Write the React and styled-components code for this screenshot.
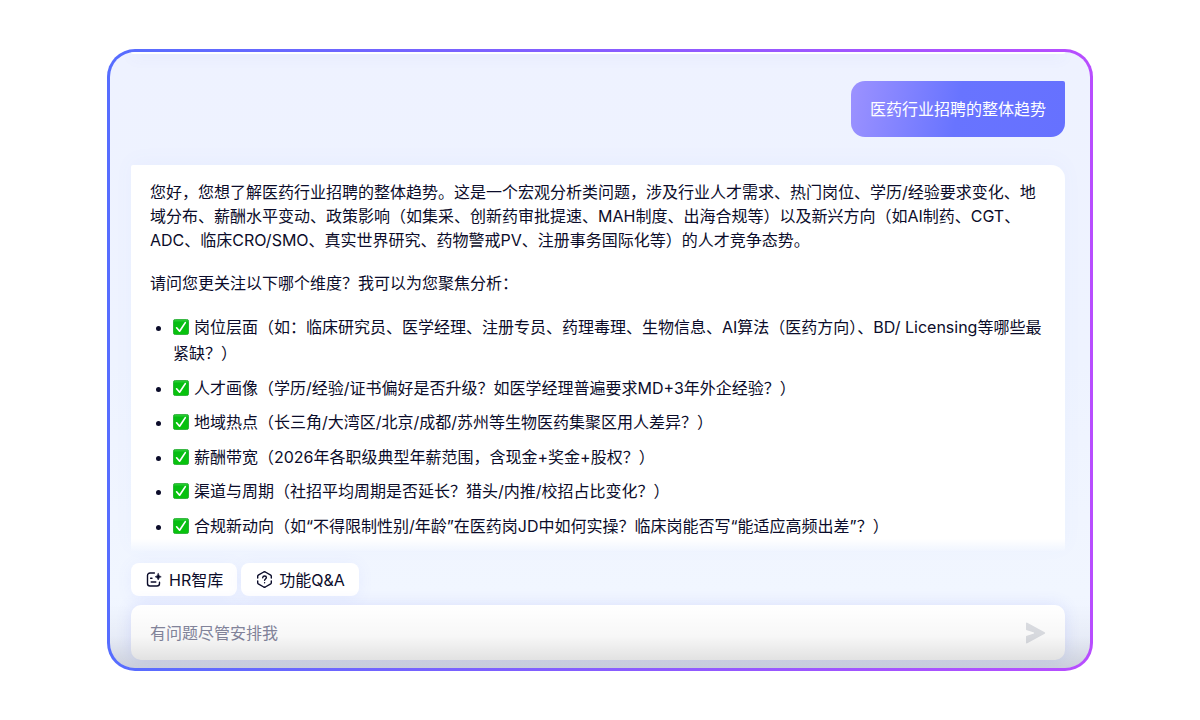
import React from "react";
import styled, { createGlobalStyle } from "styled-components";

const GlobalStyle = createGlobalStyle`
  * { box-sizing: border-box; }
  body {
    margin: 0;
    background: #fff;
    color: #0b0c2a;
    font: 16px/24px Inter, "Noto Sans CJK SC", sans-serif;
  }
`;

const Page = styled.main`
  min-height: 100vh;
  padding: 49px calc(9% - 1px);
  display: flex;
  flex-direction: column;
`;

const Frame = styled.section`
  flex: 1;
  display: flex;
  padding: 3px;
  border-radius: 28px;
  background: linear-gradient(90deg, #566dff, #b84dff);
`;

const Panel = styled.div`
  position: relative;
  flex: 1;
  min-width: 0;
  display: flex;
  flex-direction: column;
  overflow: hidden;
  padding: 0 25px 8px 21px;
  border-radius: 25px;
  background: linear-gradient(180deg, #eef2ff 0%, #eef3ff 50%, #f1f6ff 88%, #edf2ff 100%);
`;

const HeaderEdge = styled.div`
  height: 2px;
  flex: none;
  border-radius: 0 0 12px 12px;
  background: #fff;
  box-shadow: 0 2px 14px rgba(88, 96, 220, 0.18);
`;

const UserRow = styled.div`
  display: flex;
  justify-content: flex-end;
  padding: 27px 0 28px;
`;

const Bubble = styled.p`
  margin: 0;
  padding: 16px 19px;
  border-radius: 14px 2px 14px 14px;
  background: linear-gradient(100deg, #9c92ff 0%, #6874ff 50%, #6671ff 100%);
  color: #fff;
`;

const Answer = styled.article`
  flex: 1;
  padding: 15px 18px 11px 19px;
  border-radius: 2px 14px 0 0;
  background: linear-gradient(180deg, #fff calc(100% - 12px), rgba(255, 255, 255, 0) 100%);
  box-shadow: 0 -4px 20px rgba(104, 116, 255, 0.04);
`;

const Paragraph = styled.p`
  margin: 0 0 19px;
  line-height: 24px;
`;

const Topics = styled.ul`
  height: 225px;
  margin: 0;
  padding: 0 0 0 23px;
  display: flex;
  flex-direction: column;
  justify-content: space-between;
`;

const Topic = styled.li`
  line-height: 26px;
`;

const Tick = styled.svg`
  width: 16px;
  height: 16px;
  margin-right: 5px;
  vertical-align: -2px;
`;

const Shortcuts = styled.nav`
  display: flex;
  gap: 4px;
  padding: 12px 0 9px;
`;

const Shortcut = styled.button`
  height: 33px;
  display: flex;
  align-items: center;
  gap: 6px;
  padding: 0 14px 0 15px;
  border: 0;
  border-radius: 8px;
  background: #fff;
  color: inherit;
  font: inherit;
  box-shadow: 0 2px 16px rgba(104, 116, 255, 0.08);
  svg { width: 17px; height: 17px; }
`;

const Composer = styled.form`
  height: 55px;
  flex: none;
  display: flex;
  align-items: center;
  padding: 0 19px;
  border-radius: 10px;
  background: #fff;
  box-shadow: 0 0 16px rgba(88, 96, 240, 0.14);
`;

const Question = styled.input`
  flex: 1;
  min-width: 0;
  padding: 0;
  border: 0;
  outline: 0;
  background: transparent;
  color: inherit;
  font: inherit;
  &::placeholder { color: #84869d; opacity: 1; }
`;

const Send = styled.button`
  display: flex;
  padding: 0;
  border: 0;
  background: none;
  color: #dddfe4;
  svg { width: 21px; height: 24px; }
`;

const BottomShade = styled.div`
  position: absolute;
  inset: auto 0 0;
  height: 64px;
  background: linear-gradient(180deg, rgba(0, 0, 0, 0), rgba(0, 0, 0, 0.03) 50%, rgba(0, 0, 0, 0.14));
  pointer-events: none;
`;

const topics = [
  "岗位层面（如：临床研究员、医学经理、注册专员、药理毒理、生物信息、AI算法（医药方向）、BD/ Licensing等哪些最紧缺？）",
  "人才画像（学历/经验/证书偏好是否升级？如医学经理普遍要求MD+3年外企经验？）",
  "地域热点（长三角/大湾区/北京/成都/苏州等生物医药集聚区用人差异？）",
  "薪酬带宽（2026年各职级典型年薪范围，含现金+奖金+股权？）",
  "渠道与周期（社招平均周期是否延长？猎头/内推/校招占比变化？）",
  "合规新动向（如“不得限制性别/年龄”在医药岗JD中如何实操？临床岗能否写“能适应高频出差”？）",
];

const TickIcon = () => (
  <Tick viewBox="0 0 16 16" role="img" aria-label="✅">
    <defs>
      <linearGradient id="tickFill" x1="0" y1="0" x2="0" y2="1">
        <stop offset="0" stopColor="#35d33d" />
        <stop offset="0.2" stopColor="#06bd13" />
        <stop offset="1" stopColor="#08c40c" />
      </linearGradient>
    </defs>
    <rect x="0.4" y="0.4" width="15.2" height="15.2" rx="2" fill="url(#tickFill)" stroke="#14a322" strokeWidth="0.8" />
    <path d="M3.6 8.8 6.6 12.2 12.3 3.6" fill="none" stroke="#fff" strokeWidth="1.7" strokeLinecap="round" strokeLinejoin="round" />
  </Tick>
);

const LibraryIcon = () => (
  <svg viewBox="0 0 17 17" fill="none" stroke="currentColor" strokeWidth="1.4" strokeLinecap="round" aria-hidden="true">
    <path d="M8.4 2H4A2.5 2.5 0 0 0 1.5 4.5v8A2.5 2.5 0 0 0 4 15h7a2.5 2.5 0 0 0 2.5-2.5v-1.3" />
    <path d="M4.6 7.2H6M5.2 11h4.6" />
    <path d="M12.2 2.4q.5 2.8 3.1 3.4-2.6.6-3.1 3.2-.5-2.6-3.1-3.2 2.6-.6 3.1-3.4Z" fill="currentColor" strokeWidth="0.5" />
  </svg>
);

const HelpIcon = () => (
  <svg viewBox="0 0 17 17" fill="none" stroke="currentColor" strokeWidth="1.4" strokeLinecap="round" strokeLinejoin="round" aria-hidden="true">
    <path d="M1.7 7V5.2q0-.7.6-1.1L7.7 1q.8-.4 1.6 0l5.4 3.1q.6.4.6 1.1V7" />
    <path d="M1.7 10v1.8q0 .7.6 1.1L7.7 16q.8.4 1.6 0l5.4-3.1q.6-.4.6-1.1V10" />
    <path d="M6.7 6.7c.1-1.1.8-1.7 1.9-1.7 1 0 1.8.6 1.8 1.6 0 1.3-1.8 1.4-1.8 2.7M8.6 11.7v.1" />
  </svg>
);

const SendIcon = () => (
  <svg viewBox="0 0 21 24" aria-hidden="true">
    <path d="M2.3 1.7 19.7 11.3q1.2.7 0 1.4L2.3 22.3Q1 22.8 1 21.6v-5.8q0-.9.9-1.1L9 12.4v-.8L1.9 9.3Q1 9.1 1 8.2V2.4q0-1.2 1.3-.7Z" fill="currentColor" />
  </svg>
);

export default function App() {
  return (
    <Page>
      <GlobalStyle />
      <Frame>
        <Panel>
          <HeaderEdge />
          <UserRow>
            <Bubble>医药行业招聘的整体趋势</Bubble>
          </UserRow>
          <Answer>
            <Paragraph>
              您好，您想了解医药行业招聘的整体趋势。这是一个宏观分析类问题，涉及行业人才需求、热门岗位、学历/经验要求变化、地域分布、薪酬水平变动、政策影响（如集采、创新药审批提速、MAH制度、出海合规等）以及新兴方向（如AI制药、CGT、ADC、临床CRO/SMO、真实世界研究、药物警戒PV、注册事务国际化等）的人才竞争态势。
            </Paragraph>
            <Paragraph>请问您更关注以下哪个维度？我可以为您聚焦分析：</Paragraph>
            <Topics>
              {topics.map((topic) => (
                <Topic key={topic}>
                  <TickIcon />
                  {topic}
                </Topic>
              ))}
            </Topics>
          </Answer>
          <Shortcuts aria-label="快捷入口">
            <Shortcut type="button"><LibraryIcon />HR智库</Shortcut>
            <Shortcut type="button"><HelpIcon />功能Q&amp;A</Shortcut>
          </Shortcuts>
          <Composer onSubmit={(e) => e.preventDefault()}>
            <Question aria-label="输入问题" placeholder="有问题尽管安排我" />
            <Send type="submit" aria-label="发送"><SendIcon /></Send>
          </Composer>
          <BottomShade />
        </Panel>
      </Frame>
    </Page>
  );
}
